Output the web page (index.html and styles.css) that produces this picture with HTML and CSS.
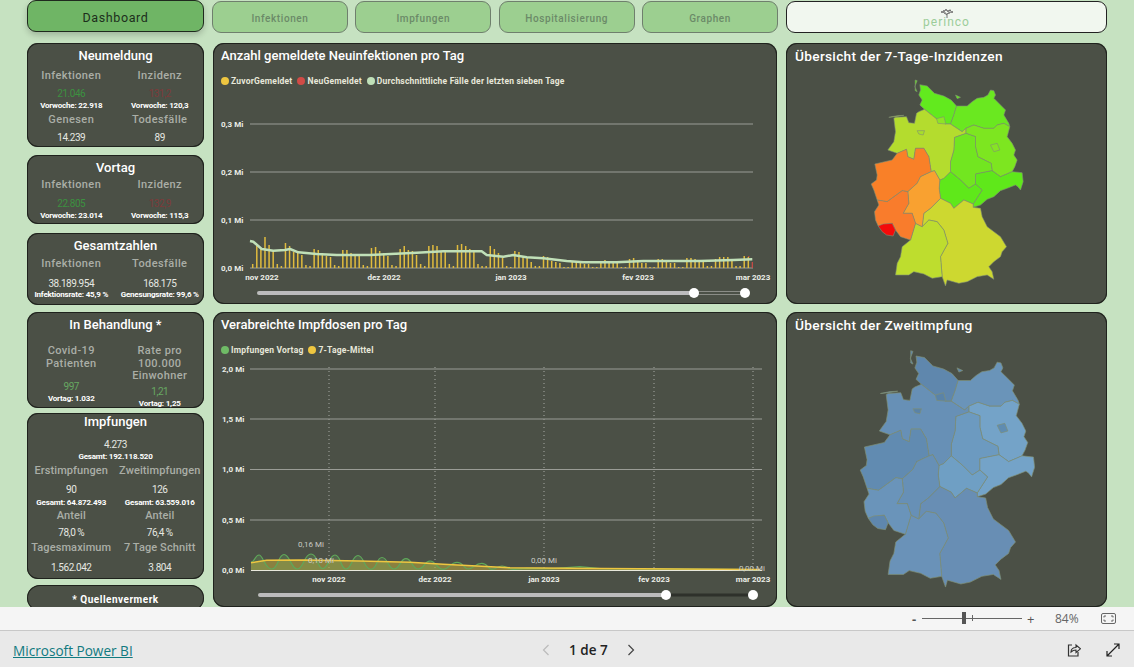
FILE: index.html
```html
<!DOCTYPE html>
<html lang="de">
<head>
  <meta charset="UTF-8">
  <title>Dashboard</title>
  <link rel="stylesheet" href="styles.css">
</head>
<body>
  <div class="report">
    <!-- Navigation -->
    <div class="nav">
      <div class="nav-btn active">Dashboard</div>
      <div class="nav-group">
        <div class="nav-btn">Infektionen</div>
        <div class="nav-btn">Impfungen</div>
        <div class="nav-btn">Hospitalisierung</div>
        <div class="nav-btn">Graphen</div>
      </div>
      <div class="nav-logo">
        <svg class="logo-tree" width="18" height="9" viewBox="0 0 16 9">
          <path d="M8 9V4M8 6L4 3M8 5l4-2" stroke="#555" fill="none" stroke-width=".8"/>
          <g fill="#666">
            <circle cx="3" cy="3" r="1"/><circle cx="5" cy="2" r="1"/><circle cx="7" cy="1" r="1"/><circle cx="9" cy="2" r="1"/>
            <circle cx="11" cy="1.5" r="1"/><circle cx="13" cy="3" r="1"/><circle cx="6" cy="4" r=".8"/><circle cx="10" cy="4" r=".8"/>
          </g>
        </svg>
        <div class="logo-text">perinco</div>
      </div>
    </div>

    <!-- Kennzahlen -->
    <div class="side">
      <div class="card card-neu">
        <div class="card-title">Neumeldung</div>
        <div class="stats">
          <div class="stat">
            <div class="label">Infektionen</div>
            <div class="value green">21.046</div>
            <div class="sub">Vorwoche: 22.918</div>
          </div>
          <div class="stat">
            <div class="label">Inzidenz</div>
            <div class="value red">131,2</div>
            <div class="sub">Vorwoche: 120,3</div>
          </div>
          <div class="stat">
            <div class="label">Genesen</div>
            <div class="value">14.239</div>
          </div>
          <div class="stat">
            <div class="label">Todesfälle</div>
            <div class="value">89</div>
          </div>
        </div>
      </div>

      <div class="card card-vortag">
        <div class="card-title">Vortag</div>
        <div class="stats">
          <div class="stat">
            <div class="label">Infektionen</div>
            <div class="value green">22.805</div>
            <div class="sub">Vorwoche: 23.014</div>
          </div>
          <div class="stat">
            <div class="label">Inzidenz</div>
            <div class="value red">132,9</div>
            <div class="sub">Vorwoche: 115,3</div>
          </div>
        </div>
      </div>

      <div class="card card-gesamt">
        <div class="card-title">Gesamtzahlen</div>
        <div class="stats">
          <div class="stat">
            <div class="label">Infektionen</div>
            <div class="value">38.189.954</div>
            <div class="sub">Infektionsrate: 45,9 %</div>
          </div>
          <div class="stat">
            <div class="label">Todesfälle</div>
            <div class="value">168.175</div>
            <div class="sub">Genesungsrate: 99,6 %</div>
          </div>
        </div>
      </div>

      <div class="card card-behandlung">
        <div class="card-title">In Behandlung *</div>
        <div class="stats">
          <div class="stat">
            <div class="label">Covid-19<br>Patienten</div>
            <div class="value pale-green">997</div>
            <div class="sub">Vortag: 1.032</div>
          </div>
          <div class="stat">
            <div class="label">Rate pro<br>100.000<br>Einwohner</div>
            <div class="value pale-green">1,21</div>
            <div class="sub">Vortag: 1,25</div>
          </div>
        </div>
      </div>

      <div class="card card-impfung">
        <div class="card-title">Impfungen</div>
        <div class="impf-top">
          <div class="value">4.273</div>
          <div class="sub">Gesamt: 192.118.520</div>
        </div>
        <div class="stats">
          <div class="stat">
            <div class="label">Erstimpfungen</div>
            <div class="value">90</div>
            <div class="sub">Gesamt: 64.872.493</div>
          </div>
          <div class="stat">
            <div class="label">Zweitimpfungen</div>
            <div class="value">126</div>
            <div class="sub">Gesamt: 63.559.016</div>
          </div>
          <div class="stat">
            <div class="label">Anteil</div>
            <div class="value">78,0 %</div>
          </div>
          <div class="stat">
            <div class="label">Anteil</div>
            <div class="value">76,4 %</div>
          </div>
          <div class="stat">
            <div class="label">Tagesmaximum</div>
            <div class="value">1.562.042</div>
          </div>
          <div class="stat">
            <div class="label">7 Tage Schnitt</div>
            <div class="value">3.804</div>
          </div>
        </div>
      </div>

      <div class="card card-quelle">* Quellenvermerk</div>
    </div>

    <!-- Neuinfektionen -->
    <div class="panel chart-top">
      <div class="panel-title">Anzahl gemeldete Neuinfektionen pro Tag</div>
      <div class="legend">
        <span class="legend-item"><i class="dot dot-yellow"></i>ZuvorGemeldet</span>
        <span class="legend-item"><i class="dot dot-red"></i>NeuGemeldet</span>
        <span class="legend-item"><i class="dot dot-pale"></i>Durchschnittliche Fälle der letzten sieben Tage</span>
      </div>
      <svg class="plot" width="564" height="212" viewBox="213 92 564 212">
        <g class="grid">
          <path d="M250 124H753M250 172H753M250 220H753M250 268H753"/>
        </g>
        <g class="axis">
          <text x="221" y="127">0,3 Mi</text>
          <text x="221" y="175">0,2 Mi</text>
          <text x="221" y="223">0,1 Mi</text>
          <text x="221" y="271">0,0 Mi</text>
        </g>
        <path class="bars" d="M252.7 268v-4m4.096 4v-22m4.096 22v-20m4.096 20v-31m4.096 31v-23m4.096 23v-17m4.096 17v-4m4.096 4v-2m4.096 2v-25m4.096 25v-22m4.096 22v-16m4.096 16v-15m4.096 15v-13m4.096 13v-3m4.096 3v-2m4.096 2v-19m4.096 19v-18m4.096 18v-15m4.096 15v-12m4.096 12v-11m4.096 11v-3m4.096 3v-2m4.096 2v-18m4.096 18v-18m4.096 18v-15m4.096 15v-14m4.096 14v-12m4.096 12v-3m4.096 3v-2m4.096 2v-20m4.096 20v-21m4.096 21v-17m4.096 17v-15m4.096 15v-12m4.096 12v-3m4.096 3v-2m4.096 2v-19m4.096 19v-22m4.096 22v-18m4.096 18v-17m4.096 17v-13m4.096 13v-4m4.096 4v-2m4.096 2v-22m4.096 22v-23m4.096 23v-22m4.096 22v-17m4.096 17v-16m4.096 16v-4m4.096 4v-2m4.096 2v-23m4.096 23v-24m4.096 24v-22m4.096 22v-19m4.096 19v-16m4.096 16v-4m4.096 4v-2m4.096 2v-2m4.096 2v-22m4.096 22v-19m4.096 19v-15m4.096 15v-10m4.096 10v-2m4.096 2v-1m4.096 1v-17m4.096 17v-16m4.096 16v-11m4.096 11v-10m4.096 10v-6m4.096 6v-2m4.096 2v-2m4.096 2v-12m4.096 12v-11m4.096 11v-7m4.096 7v-6m4.096 6v-5m4.096 5v-1m4.096 1v-1m4.096 1v-7m4.096 7v-7m4.096 7v-5m4.096 5v-4m4.096 4v-4m4.096 4v-1m4.096 1v-1m4.096 1v-7m4.096 7v-8m4.096 8v-7m4.096 7v-5m4.096 5v-5m4.096 5v-1m4.096 1v-1m4.096 1v-9m4.096 9v-10m4.096 10v-8m4.096 8v-5m4.096 5v-5m4.096 5v-1m4.096 1v-1m4.096 1v-9m4.096 9v-9m4.096 9v-8m4.096 8v-5m4.096 5v-5m4.096 5v-1m4.096 1v-1m4.096 1v-10m4.096 10v-10m4.096 10v-9m4.096 9v-7m4.096 7v-7m4.096 7v-2m4.096 2v-2m4.096 2v-9m4.096 9v-11m4.096 11v-11m4.096 11v-11m4.096 11v-9m4.096 9v-2m4.096 2v-2m4.096 2v-12m4.096 12v-11"/>
        <path class="bar-new" d="M748.8 257v-1M752.3 268v-6"/>
        <polyline class="avg-line" points="250,241 253.3,241.7 261.7,249 273.3,250.7 285,250 290,249 298.3,252.3 316.7,254 336.7,255 370,255 416.7,252.7 443.3,251.3 481.7,251.3 486.7,255 503.3,256.7 513.3,255 526.7,257.3 543.3,258.3 566.7,261 583.3,262.3 616.7,262.3 643.3,261 700,261 733.3,260 752.3,259.3"/>
        <g class="axis axis-x">
          <text x="262" y="280">nov 2022</text>
          <text x="384" y="280">dez 2022</text>
          <text x="511" y="280">jan 2023</text>
          <text x="638" y="280">fev 2023</text>
          <text x="753" y="280">mar 2023</text>
        </g>
        <path class="slider-track" d="M259 293H694"/>
        <path class="slider-rest" d="M694 291.5H745M694 294.5H745"/>
        <circle class="slider-knob" cx="694" cy="293" r="5"/>
        <circle class="slider-knob" cx="745" cy="293" r="5"/>
      </svg>
    </div>

    <!-- Karte Inzidenz -->
    <div class="panel map-top">
      <div class="panel-title">Übersicht der 7-Tage-Inzidenzen</div>
      <svg class="map" width="321" height="234" viewBox="18 210 960 702">
        <defs>
          <path id="st-sh" d="M418 254L440 258 462 280 490 288 512 300 528 318 520 345 510 372 495 372 470 358 432 328 418 315 425 300 415 285 420 270ZM404 240L410 242 403 260 410 275 404 272ZM525 285L540 292 530 296Z"/>
          <path id="st-mv" d="M510 372L520 345 528 318 560 318 575 305 590 295 610 292 622 285 630 270 640 272 645 285 640 295 660 315 675 330 670 345 685 370 688 380 670 370 650 375 640 385 610 385 580 375 556 385 545 395Z"/>
          <path id="st-bb" d="M556 385L580 375 610 385 640 385 650 375 670 370 688 380 680 410 695 430 705 450 700 465 710 480 703 500 695 515 660 530 635 512 632 490 592 470 585 440 585 410 556 400Z"/>
          <path id="st-be" d="M630 435L650 430 658 450 640 455Z"/>
          <path id="st-sn" d="M585 522L635 512 660 530 695 515 725 518 728 545 720 570 712 560 705 555 680 565 660 572 640 590 620 598 600 615 578 622 578 612 605 570 585 552Z"/>
          <path id="st-st" d="M522 412L556 400 585 410 585 440 592 470 632 490 635 512 585 522 585 552 565 565 540 540 510 515 510 485 520 450Z"/>
          <path id="st-th" d="M510 515L540 540 565 565 585 552 605 570 578 612 550 600 520 625 510 610 480 595 476 565 478 540 490 535Z"/>
          <path id="st-ni" d="M345 352L378 350 385 368 402 370 408 340 415 335 432 328 470 358 495 372 510 372 545 395 556 385 556 400 522 412 520 450 510 485 510 515 490 535 478 540 462 512 452 515 445 470 430 445 405 445 400 478 382 470 378 448 350 460 322 450 340 425 345 395 340 355ZM325 352L350 347 370 346 345 350Z"/>
          <path id="st-hb" d="M410 392L432 392 428 405 415 402Z"/>
          <path id="st-hh" d="M468 356L490 350 496 372 472 370Z"/>
          <path id="st-nw" d="M378 448L382 470 400 478 405 445 430 445 445 470 452 515 420 530 410 550 382 575 365 572 320 605 290 600 280 570 272 552 288 540 290 525 283 492 335 480 350 460Z"/>
          <path id="st-he" d="M452 515L462 512 478 540 476 565 480 595 450 625 430 640 425 680 405 670 395 640 368 640 385 610 382 575 410 550 420 530Z"/>
          <path id="st-rp" d="M365 572L382 575 385 610 368 640 395 640 405 670 390 720 360 710 345 690 335 670 293 678 285 660 282 635 295 615 290 600 320 605Z"/>
          <path id="st-sl" d="M293 678L308 672 335 670 345 690 338 708 318 705 305 695Z"/>
          <path id="st-bw" d="M425 680L445 660 470 665 490 690 502 730 480 770 485 830 455 835 430 822 400 815 385 825 345 825 350 790 360 770 365 740 390 720 405 670Z"/>
          <path id="st-by" d="M450 625L480 595 510 610 520 625 550 600 578 612 578 622 600 625 605 650 620 680 640 695 660 710 678 740 665 755 660 770 640 785 625 800 635 815 640 838 620 825 590 830 560 845 535 850 500 840 495 858 485 830 480 770 502 730 490 690 470 665 445 660 425 680 430 640Z"/>
        </defs>
        <g class="states">
          <use href="#st-sh" fill="#62ea1e"/><use href="#st-mv" fill="#6ae820"/><use href="#st-bb" fill="#7de620"/><use href="#st-st" fill="#72e620"/>
          <use href="#st-sn" fill="#5fe81a"/><use href="#st-th" fill="#5fe81a"/><use href="#st-ni" fill="#b4dc2e"/><use href="#st-by" fill="#cdd830"/>
          <use href="#st-bw" fill="#bedd2e"/><use href="#st-nw" fill="#f98028"/><use href="#st-he" fill="#f9a130"/><use href="#st-rp" fill="#f97c2c"/>
          <use href="#st-sl" fill="#f40a0a"/><use href="#st-be" fill="#86e424"/><use href="#st-hb" fill="#a8de2a"/><use href="#st-hh" fill="#8ee426"/>
        </g>
      </svg>
    </div>

    <!-- Impfdosen -->
    <div class="panel chart-bottom">
      <div class="panel-title">Verabreichte Impfdosen pro Tag</div>
      <div class="legend">
        <span class="legend-item"><i class="dot dot-green"></i>Impfungen Vortag</span>
        <span class="legend-item"><i class="dot dot-yellow"></i>7-Tage-Mittel</span>
      </div>
      <svg class="plot" width="564" height="246" viewBox="213 361 564 246">
        <path class="dotted" d="M329 367V570M435 367V570M544 367V570M654 367V570M753 367V570"/>
        <g class="grid">
          <path d="M250 369H762M250 419H762M250 469.500H762M250 520H762"/>
        </g>
        <g class="axis">
          <text x="222" y="372">2,0 Mi</text>
          <text x="222" y="422">1,5 Mi</text>
          <text x="222" y="472">1,0 Mi</text>
          <text x="222" y="523">0,5 Mi</text>
          <text x="222" y="573">0,0 Mi</text>
        </g>
        <path class="area-mean" d="M251 570.500V562.700L266.700 560.300 303.300 560 360 561 410 562.300 443.300 564.300 476.700 566 510 567.700 600 568.500 760 569.500V570.500Z"/>
        <path class="area-doses" d="M251 570.500V562C255 562 255 555 259 555S265 569 271.700 569S278 554.500 284 554.500S291 569 297.300 569S304 554 311 554S317 568.500 322.700 568.500S329 555 335 555S340.500 569 346 569S352 555.500 358 555.500S364 569.300 370.700 569.300S376 557.500 382 557.500S388 569 394 569S400 558.700 406 558.700S412 569 418.300 569S424 561 430 561S437 569.300 443.300 569.300V570.500Z"/>
        <path class="base" d="M251 570.500H762"/>
        <path class="line-doses" d="M251 562C255 562 255 555 259 555S265 569 271.700 569S278 554.500 284 554.500S291 569 297.300 569S304 554 311 554S317 568.500 322.700 568.500S329 555 335 555S340.500 569 346 569S352 555.500 358 555.500S364 569.300 370.700 569.300S376 557.500 382 557.500S388 569 394 569S400 558.700 406 558.700S412 569 418.300 569S424 561 430 561S437 569.300 443.300 569.300S450 562.300 457 562.300S463 569 468.300 569S475 563.300 481.700 563.300S487 569.300 491.700 569.300S497 566 502 566S508 569.300 513.300 569.300L526.700 568.300 553.300 568.700 580 566.700 600 568.700 666.700 569 760 569.700"/>
        <polyline class="line-mean" points="251,562.7 266.7,560.3 303.3,560 360,561 410,562.3 443.3,564.3 476.7,566 510,567.7 600,568.5 760,569.5"/>
        <g class="callouts">
          <text x="311" y="547">0,16 Mi</text>
          <text x="321" y="563">0,10 Mi</text>
          <text x="544" y="563">0,00 Mi</text>
          <text x="752" y="571">0,00 Mi</text>
        </g>
        <g class="axis axis-x">
          <text x="329" y="582">nov 2022</text>
          <text x="435" y="582">dez 2022</text>
          <text x="544" y="582">jan 2023</text>
          <text x="654" y="582">fev 2023</text>
          <text x="753" y="582">mar 2023</text>
        </g>
        <path class="slider-track" d="M260 595H666"/>
        <path class="slider-rest-solid" d="M666 595H753"/>
        <circle class="slider-knob" cx="666" cy="595" r="5"/>
        <circle class="slider-knob" cx="753" cy="595" r="5"/>
      </svg>
    </div>

    <!-- Karte Zweitimpfung -->
    <div class="panel map-bottom">
      <div class="panel-title">Übersicht der Zweitimpfung</div>
      <svg class="map" width="321" height="267" viewBox="79.600 209.500 836 698">
        <g class="states">
          <use href="#st-sh" fill="#5f87ad"/><use href="#st-mv" fill="#6a94b9"/><use href="#st-bb" fill="#74a3c8"/><use href="#st-st" fill="#6c9ac0"/>
          <use href="#st-sn" fill="#74a3c8"/><use href="#st-th" fill="#6f9fc4"/><use href="#st-ni" fill="#6790b6"/><use href="#st-by" fill="#688eb4"/>
          <use href="#st-bw" fill="#6a92b8"/><use href="#st-nw" fill="#618bb1"/><use href="#st-he" fill="#6790b6"/><use href="#st-rp" fill="#6a94ba"/>
          <use href="#st-sl" fill="#5f87ad"/><use href="#st-be" fill="#5f8cb1"/><use href="#st-hb" fill="#5a83a8"/><use href="#st-hh" fill="#5a83a8"/>
        </g>
      </svg>
    </div>
  </div>

  <!-- Zoomleiste -->
  <div class="zoombar">
    <span class="zoom-sign">-</span>
    <div class="zoom-slider"><i class="zoom-thumb"></i><i class="zoom-tick"></i></div>
    <span class="zoom-sign plus">+</span>
    <span class="zoom-value">84%</span>
    <svg class="zoom-fit" width="15" height="11" viewBox="0 0 15 11">
      <rect x=".5" y=".5" width="14" height="10" rx="1.500" fill="none" stroke="#666"/>
      <path d="M3 4.500V3H5M10 3H12V4.500M12 6.500V8H10M5 8H3V6.500" fill="none" stroke="#666"/>
    </svg>
  </div>

  <!-- Fusszeile -->
  <div class="footer">
    <a class="pbi-link" href="#">Microsoft Power BI</a>
    <div class="pager">
      <svg width="8" height="12" viewBox="0 0 8 12"><path d="M6.500 1L1.500 6l5 5" fill="none" stroke="#bbb" stroke-width="1.200"/></svg>
      <span class="pager-text">1 de 7</span>
      <svg width="8" height="12" viewBox="0 0 8 12"><path d="M1.500 1l5 5-5 5" fill="none" stroke="#444" stroke-width="1.200"/></svg>
    </div>
    <div class="footer-icons">
      <svg width="14" height="14" viewBox="0 0 14 14">
        <path d="M5 2H1.500V13H11V9" fill="none" stroke="#333" stroke-width="1.200"/>
        <path d="M4 9C4 6 6 4.500 9 4.500V2L13.500 5.800 9 9.500V7C7 7 5.500 7.500 4 9Z" fill="none" stroke="#333" stroke-width="1.100"/>
      </svg>
      <svg width="14" height="14" viewBox="0 0 14 14">
        <path d="M1 13L13 1M8 1H13V6M1 8V13H6" fill="none" stroke="#222" stroke-width="1.200"/>
      </svg>
    </div>
  </div>
</body>
</html>
```

FILE: styles.css
```css
body {
  margin: 0;
  width: 1134px;
  height: 667px;
  overflow: hidden;
  background-color: #e9e9e9;
  font-family: Roboto, "Liberation Sans", sans-serif;
}

.report {
  display: grid;
  grid-template-columns: 177px 564px 321px;
  grid-template-rows: 35px 261px 295px;
  column-gap: 9px;
  row-gap: 8px;
  height: 607px;
  padding-left: 27px;
  box-sizing: border-box;
  overflow: hidden;
  background-color: #c6e2c1;
}

/* Navigation */
.nav {
  grid-column: 1 / -1;
  display: flex;
  gap: 8px;
  width: 1080px;
}

.nav-group {
  display: flex;
  gap: 7.5px;
  width: 566px;
}

.nav-btn {
  flex: 1;
  box-sizing: border-box;
  height: 32px;
  margin-top: 1px;
  border: 1px solid #6f7f6d;
  border-radius: 9px;
  background-color: #9ccf90;
  color: #6b8a68;
  font-size: 10px;
  font-weight: 500;
  letter-spacing: .6px;
  line-height: 33px;
  text-align: center;
}

.nav-btn.active {
  flex: none;
  width: 177px;
  margin-top: 0;
  border: 1px solid #1f2a1e;
  background-color: #6fb565;
  color: #1d2f1c;
  font-size: 12.500px;
  font-weight: 400;
  box-shadow: 0 3px 6px rgba(0, 0, 0, .2);
}

.nav-logo {
  box-sizing: border-box;
  width: 321px;
  height: 32px;
  margin-top: 1px;
  padding-top: 7px;
  border: 1px solid #222;
  border-radius: 9px;
  background-color: #f1f7ef;
  text-align: center;
}

.logo-tree {
  display: block;
  margin: 0 auto -1px;
}

.logo-text {
  color: #9ccd9a;
  font-size: 12px;
  line-height: 10px;
  letter-spacing: 1px;
}

/* Kennzahlen */
.side {
  grid-row: 2 / 4;
  display: flex;
  flex-direction: column;
}

.card {
  flex: none;
  box-sizing: border-box;
  border-radius: 11px;
  background-color: #4b5046;
  box-shadow: inset 0 0 0 1px #1f221d;
  text-align: center;
}

.card-title {
  color: #fff;
  font-size: 13px;
  font-weight: 500;
  line-height: 20px;
}

.stats {
  display: grid;
  grid-template-columns: 1fr 1fr;
}

.stat {
  min-width: 0;
}

.label {
  color: #aaaea6;
  font-size: 11px;
  font-weight: 500;
  letter-spacing: .4px;
  line-height: 16px;
}

.value {
  color: #e6e8e2;
  font-size: 10px;
  letter-spacing: -.45px;
  line-height: 14px;
}

.sub {
  color: #fff;
  font-size: 8px;
  font-weight: 700;
  letter-spacing: -.2px;
  line-height: 10px;
  white-space: nowrap;
}

.green { color: #3c9140; }
.red { color: #7d3a3a; }
.pale-green { color: #67a862; }

.card-neu {
  height: 104px;
  padding-top: 3px;
}

.card-neu .card-title {
  margin-bottom: 2px;
}

.card-neu .value {
  margin-top: 3px;
}

.card-neu .stat:nth-child(n+3) {
  margin-top: 1px;
}

.card-vortag {
  height: 69px;
  margin-top: 8px;
  padding-top: 3px;
}

.card-vortag .stats {
  margin-top: -1px;
}

.card-vortag .value {
  margin-top: 4px;
}

.card-gesamt {
  height: 72px;
  margin-top: 9px;
  padding-top: 3px;
}

.card-gesamt .value {
  margin-top: 5px;
}

.card-gesamt .sub {
  margin-top: -1px;
}

.card-behandlung {
  height: 96px;
  margin-top: 7px;
  padding-top: 3px;
}

.card-behandlung .stats {
  margin-top: 10px;
}

.card-behandlung .label {
  line-height: 12.500px;
}

.card-behandlung .value {
  margin-top: 9.500px;
}

.card-behandlung .stat + .stat .value {
  margin-top: 2.500px;
}

.card-impfung {
  height: 166px;
  margin-top: 5px;
}

.card-impfung .card-title {
  margin-top: -1px;
}

.impf-top {
  margin-top: 6px;
}

.card-impfung .label {
  letter-spacing: .1px;
  line-height: 14px;
}

.card-impfung .stats {
  margin-top: 2px;
}

.card-impfung .stat:nth-child(-n+2) .value {
  margin-top: 5px;
}

.card-impfung .stat:nth-child(-n+2) .sub {
  margin-top: 1px;
}

.card-impfung .stat:nth-child(n+3) {
  margin-top: 1px;
}

.card-impfung .stat:nth-child(n+3) .value {
  margin-top: 3px;
}

.card-impfung .stat:nth-child(n+5) .value {
  margin-top: 6px;
}

.card-quelle {
  height: 26px;
  margin-top: 6px;
  color: #fff;
  font-size: 10px;
  font-weight: 700;
  letter-spacing: .5px;
  line-height: 30px;
  border-radius: 13px;
}

/* Panels */
.panel {
  position: relative;
  border-radius: 11px;
  background-color: #4b5046;
  box-shadow: inset 0 0 0 1px #1f221d;
  overflow: hidden;
}

.panel-title {
  height: 27px;
  padding-left: 8px;
  color: #fff;
  font-size: 13px;
  font-weight: 500;
  line-height: 25px;
}

.map-top .panel-title,
.map-bottom .panel-title {
  padding-left: 9px;
  font-size: 13.700px;
  letter-spacing: .3px;
  line-height: 27px;
}

.legend {
  display: flex;
  gap: 5px;
  height: 23px;
  margin-top: -1px;
  padding-left: 8px;
  color: #e8e8da;
  font-size: 8.500px;
  font-weight: 700;
  letter-spacing: .2px;
  line-height: 20px;
}

.legend-item {
  display: flex;
  align-items: center;
  gap: 2px;
}

.dot {
  width: 8px;
  height: 8px;
  border-radius: 50%;
}

.dot-yellow { background-color: #eec640; }
.dot-red { background-color: #d14b46; }
.dot-pale { background-color: #bfe0b8; }
.dot-green { background-color: #6fbb66; }

.plot,
.map {
  display: block;
}

.grid path {
  fill: none;
  stroke: #9a9c96;
  stroke-width: 1;
}

.axis text {
  fill: #eceee8;
  font-size: 8px;
  font-weight: 700;
}

.axis-x text {
  text-anchor: middle;
}

.bars {
  fill: none;
  stroke: #e0bb3e;
  stroke-width: 1.500;
}

.bar-new {
  fill: none;
  stroke: #d14b46;
  stroke-width: 1.200;
}

.avg-line {
  fill: none;
  stroke: #c0e0b8;
  stroke-width: 2.500;
  stroke-linejoin: round;
}

.slider-track {
  stroke: #bcbcbc;
  stroke-width: 4;
  stroke-linecap: round;
}

.slider-rest {
  fill: none;
  stroke: #8a8c86;
  stroke-width: 1;
}

.slider-rest-solid {
  stroke: #2e312b;
  stroke-width: 3;
}

.slider-knob {
  fill: #fff;
}

.dotted {
  fill: none;
  stroke: #a8aaa4;
  stroke-width: 1;
  stroke-dasharray: 1 3;
}

.area-mean {
  fill: #c9b03a;
  fill-opacity: .5;
}

.area-doses {
  fill: #6fbb66;
  fill-opacity: .2;
}

.base {
  stroke: #e8e8dc;
  stroke-width: 1;
}

.line-doses {
  fill: none;
  stroke: #5fa85a;
  stroke-width: 1.200;
}

.line-mean {
  fill: none;
  stroke: #eec640;
  stroke-width: 1.500;
}

.callouts text {
  fill: #c8cac4;
  font-size: 8px;
  text-anchor: middle;
}

.states use {
  stroke: #7f8f74;
  stroke-width: 1.800;
  stroke-linejoin: round;
}

/* Zoomleiste */
.zoombar {
  display: flex;
  align-items: center;
  box-sizing: border-box;
  height: 24px;
  padding-left: 912px;
  border-bottom: 1px solid #c8c8c8;
  background-color: #f5f5f5;
  color: #555;
  font-family: "Open Sans", sans-serif;
}

.zoom-sign {
  width: 10px;
  font-size: 13px;
  font-weight: 700;
  line-height: 14px;
}

.zoom-sign.plus {
  width: 12px;
  margin-left: 5px;
  font-weight: 400;
}

.zoom-slider {
  position: relative;
  width: 100px;
  height: 1px;
  background-color: #666;
}

.zoom-thumb {
  position: absolute;
  left: 40px;
  top: -6px;
  width: 4px;
  height: 12px;
  background-color: #555;
}

.zoom-tick {
  position: absolute;
  left: 50px;
  top: -3px;
  width: 1px;
  height: 6px;
  background-color: #666;
}

.zoom-value {
  margin-left: 16px;
  font-size: 12px;
  color: #666;
}

.zoom-fit {
  margin-left: 22px;
}

/* Fusszeile */
.footer {
  display: flex;
  align-items: center;
  box-sizing: border-box;
  height: 36px;
  padding: 2px 13px 0;
  background-color: #e9e9e9;
  font-family: "Open Sans", sans-serif;
}

.pbi-link {
  width: 529px;
  color: #117a80;
  font-size: 13.600px;
}

.pager {
  display: flex;
  align-items: center;
  gap: 19px;
  font-size: 13.500px;
  font-weight: 600;
  color: #222;
}

.footer-icons {
  display: flex;
  gap: 25px;
  margin-left: auto;
  padding-right: 1px;
}
```
